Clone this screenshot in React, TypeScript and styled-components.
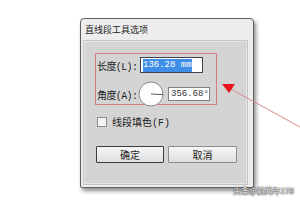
import React from "react";
import styled, { createGlobalStyle } from "styled-components";

const Global = createGlobalStyle`
  html, body { margin: 0; padding: 0; background: #ffffff; }
  body { width: 300px; height: 200px; overflow: hidden; }
`;

const MONO = `"Liberation Mono", "Noto Sans CJK SC", monospace`;
const CJK = `"Noto Sans CJK SC", "Liberation Sans", sans-serif`;

const Stage = styled.div`
  position: relative;
  width: 300px;
  height: 200px;
  box-sizing: border-box;
  padding: 18px 0 0 80px;
  background: #ffffff;
`;

const Dialog = styled.div`
  width: 174px;
  height: 170px;
  box-sizing: border-box;
  border: 1px solid #5e5e5e;
  border-radius: 4px 4px 2px 2px;
  background: #ededed;
  box-shadow: 2px 3px 4px rgba(0, 0, 0, 0.45);
  display: flex;
  flex-direction: column;
`;

const TitleBar = styled.div`
  height: 21px;
  display: flex;
  align-items: center;
  padding-left: 4px;
  font-family: ${CJK};
  font-size: 9px;
  color: #1e1e1e;
`;

const Panel = styled.div`
  flex: 1;
  margin: 0 5px 2px 2px;
  border: 1px solid #c4c4c4;
  box-shadow: inset 0 0 0 1px #e6e6e6;
  background: #d4d4d4;
  padding: 12px 0 0 11px;
  display: flex;
  flex-direction: column;
  align-items: flex-start;
`;

const Highlight = styled.div`
  width: 122px;
  height: 52px;
  box-sizing: border-box;
  border: 1px solid #d77b80;
  padding: 3px 0 0 1px;
  display: flex;
  flex-direction: column;
  gap: 8px;
`;

const Row = styled.div`
  display: flex;
  align-items: center;
`;

const Label = styled.span<{ $w: number }>`
  width: ${(p) => p.$w}px;
  font-family: ${MONO};
  font-size: 10px;
  letter-spacing: -0.6px;
  color: #222;
  white-space: nowrap;
`;

const Field = styled.div<{ $w: number; $h: number; $dark?: boolean }>`
  width: ${(p) => p.$w}px;
  height: ${(p) => p.$h}px;
  box-sizing: border-box;
  border: 1px solid ${(p) => (p.$dark ? "#3a4450" : "#808080")};
  background: #ffffff;
  display: flex;
  align-items: center;
  padding-left: 2px;
  font-family: ${MONO};
  font-size: 9px;
  color: #333;
  white-space: nowrap;
`;

const Selected = styled.span`
  background: #3f8fe8;
  color: #ffffff;
  padding: 1px 0;
  line-height: 11px;
`;

const Dial = styled.svg`
  display: block;
  margin-right: 4px;
`;

const CheckRow = styled.label`
  display: flex;
  align-items: center;
  gap: 5px;
  margin: 9px 0 0 2px;
  font-family: ${MONO};
  font-size: 10px;
  color: #222;
`;

const Box = styled.span`
  width: 8px;
  height: 8px;
  border: 1px solid #8a8a8a;
  background: #f4f4f4;
`;

const Buttons = styled.div`
  display: flex;
  gap: 4px;
  margin: 17px 0 0 1px;
`;

const Button = styled.div<{ $default?: boolean }>`
  width: ${(p) => (p.$default ? 68 : 69)}px;
  height: 17px;
  box-sizing: border-box;
  border: 1px solid ${(p) => (p.$default ? "#3c3c3c" : "#8c8c8c")};
  border-radius: 1px;
  background: linear-gradient(#f6f6f6, #dedede);
  display: flex;
  align-items: center;
  justify-content: center;
  font-family: ${CJK};
  font-size: 10px;
  color: #222;
`;

const Annotation = styled.svg`
  position: absolute;
  left: 0;
  top: 0;
  pointer-events: none;
`;

const Watermark = styled.div`
  position: absolute;
  right: 6px;
  bottom: 4px;
  font-family: ${CJK};
  font-size: 8px;
  color: #ffffff;
  text-shadow: 0 0 1px #333, 0 0 1px #333, 0 0 2px #555;
  white-space: nowrap;
`;

export default function App() {
  return (
    <Stage>
      <Global />
      <Dialog>
        <TitleBar>直线段工具选项</TitleBar>
        <Panel>
          <Highlight>
            <Row>
              <Label $w={43}>长度(L):</Label>
              <Field $w={63} $h={16} $dark>
                <Selected>136.28 mm</Selected>
              </Field>
            </Row>
            <Row>
              <Label $w={41}>角度(A):</Label>
              <Dial width="26" height="26" viewBox="0 0 26 26">
                <circle cx="13" cy="13" r="12" fill="#ffffff" stroke="#8a8a8a" strokeWidth="1" />
                <line x1="13" y1="13" x2="25" y2="13.6" stroke="#555" strokeWidth="1" />
              </Dial>
              <Field $w={42} $h={14}>356.68°</Field>
            </Row>
          </Highlight>
          <CheckRow>
            <Box />
            线段填色(F)
          </CheckRow>
          <Buttons>
            <Button $default>确定</Button>
            <Button>取消</Button>
          </Buttons>
        </Panel>
      </Dialog>
      <Annotation width="300" height="200" viewBox="0 0 300 200">
        <line x1="229" y1="88" x2="300" y2="127" stroke="#d88888" strokeWidth="1" />
        <polygon points="222,84 235,84 229,93" fill="#e8151b" />
      </Annotation>
      <Watermark>头条@前两年178</Watermark>
    </Stage>
  );
}
